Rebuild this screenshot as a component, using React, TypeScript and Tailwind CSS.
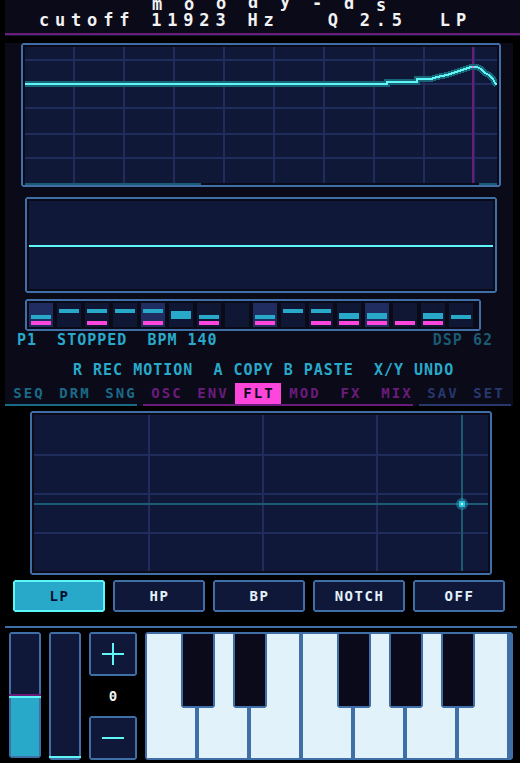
import React from "react";

// pixel-style frame: square 2px border with the corner pixels knocked out
const notch =
  "[clip-path:polygon(2px_0,calc(100%_-_2px)_0,100%_2px,100%_calc(100%_-_2px),calc(100%_-_2px)_100%,2px_100%,0_calc(100%_-_2px),0_2px)]";

type Step = { hi?: boolean; cy?: string; mag?: boolean };

const steps: Step[] = [
  { hi: true, cy: "mt-[12px] h-[4px]", mag: true },
  { cy: "mt-[6px] h-[4px]" },
  { cy: "mt-[6px] h-[4px]", mag: true },
  { cy: "mt-[6px] h-[4px]" },
  { hi: true, cy: "mt-[6px] h-[4px]", mag: true },
  { cy: "mt-[8px] h-[8px]" },
  { cy: "mt-[12px] h-[4px]", mag: true },
  {},
  { hi: true, cy: "mt-[12px] h-[4px]", mag: true },
  { cy: "mt-[6px] h-[4px]" },
  { cy: "mt-[6px] h-[4px]", mag: true },
  { cy: "mt-[10px] h-[6px]", mag: true },
  { hi: true, cy: "mt-[10px] h-[6px]", mag: true },
  { mag: true },
  { cy: "mt-[10px] h-[6px]", mag: true },
  { cy: "mt-[12px] h-[4px]" },
];

const tabGroups = [
  { line: "w-[132px] bg-[#1a6a86]", tabs: [["SEQ", "text-[#1a6a86]"], ["DRM", "text-[#1a6a86]"], ["SNG", "text-[#1a6a86]"]] },
  {
    line: "w-[270px] bg-[#6b1c7b]",
    tabs: [["OSC", "text-[#6b1c7b]"], ["ENV", "text-[#6b1c7b]"], ["FLT", "on"], ["MOD", "text-[#6b1c7b]"], ["FX", "text-[#6b1c7b]"], ["MIX", "text-[#6b1c7b]"]],
  },
  { line: "w-[92px] bg-[#27386c]", tabs: [["SAV", "text-[#27386c]"], ["SET", "text-[#27386c]"]] },
];

const filters = ["LP", "HP", "BP", "NOTCH", "OFF"];

// graph curve of the filter response
const curve =
  "0,37 362,37 362,35 392,35 392,32 406,32 412,30 422,28 428,26 434,24 440,22 446,20 452,20 456,22 460,26 464,28 468,32 470,36 472,38";

const blackKeys = ["left-[36px]", "left-[88px]", "left-[192px]", "left-[244px]", "left-[296px]"];

function Title() {
  const letters: [string, string][] = [
    ["m", "translate-y-[1px]"],
    ["o", "translate-y-[1px]"],
    ["o", "translate-y-[0px]"],
    ["d", "-translate-y-[1px]"],
    ["y", "-translate-y-[2px]"],
    ["-", "translate-y-[0px]"],
    ["d", "translate-y-[0px]"],
    ["s", "translate-y-[2px]"],
  ];
  return (
    <div className="flex h-[17px] -mt-[5px] pl-[147px] text-[17px] leading-[17px] text-[#f2f2f2]">
      {letters.map(([ch, off], i) => (
        <span key={i} className={`w-[32px] ${off}`}>
          {ch}
        </span>
      ))}
    </div>
  );
}

function FilterGraph() {
  const vlines = [48, 98, 148, 198, 248, 298, 348, 398, 448];
  const hlines = [12, 36, 60, 86, 110];
  return (
    <div className={`ml-[16px] mt-[7px] w-[480px] bg-[#3f6fa6] p-[2px] ${notch}`}>
      <div className="bg-[#0a0a19] px-[2px] pt-[2px]">
        <svg width="472" height="138" shapeRendering="crispEdges" className="block">
          <rect x="0" y="0" width="472" height="136" fill="#101838" />
          {vlines.map((x) => (
            <rect key={x} x={x} y="0" width="2" height="136" fill="#202c5c" />
          ))}
          {hlines.map((y) => (
            <rect key={y} x="0" y={y} width="472" height="2" fill="#202c5c" />
          ))}
          <rect x="447" y="0" width="2" height="136" fill="#6b1c7b" />
          <polyline points={curve} fill="none" stroke="#1a6478" strokeWidth="6" />
          <polyline points={curve} fill="none" stroke="#5ef6f6" strokeWidth="2" />
          <rect x="447" y="19" width="2" height="2" fill="#ff7ae8" />
          <rect x="0" y="136" width="176" height="2" fill="#1a5a72" />
          <rect x="454" y="136" width="18" height="2" fill="#1a5a72" />
        </svg>
      </div>
    </div>
  );
}

function Scope() {
  return (
    <div className={`ml-[20px] mt-[10px] w-[472px] bg-[#3f6fa6] p-[2px] ${notch}`}>
      <div className="bg-[#0a0a19] p-[2px]">
        <div className="h-[88px] bg-[#0f1838] pt-[44px]">
          <div className="h-[2px] bg-[#5ef6f6]" />
        </div>
      </div>
    </div>
  );
}

function Steps() {
  return (
    <div className={`ml-[20px] mt-[6px] w-[456px] bg-[#3f6fa6] p-[2px] ${notch}`}>
      <div className="flex gap-[4px] bg-[#0a0a19] p-[2px]">
        {steps.map((s, i) => (
          <div
            key={i}
            className={`flex h-[24px] w-[24px] flex-col px-[2px] pb-[2px] ${s.hi ? "bg-[#1f2d60]" : "bg-[#0f1735]"}`}
          >
            {s.cy && <div className={`${s.cy} bg-[#29a9c9]`} />}
            {s.mag && <div className="mt-auto h-[4px] bg-[#ff46dc]" />}
          </div>
        ))}
      </div>
    </div>
  );
}

function Tabs() {
  return (
    <div className="mt-[6px] flex">
      {tabGroups.map((g, gi) => (
        <div key={gi} className="flex flex-col">
          <div className="flex">
            {g.tabs.map(([label, tone]) => (
              <div
                key={label}
                className={`flex h-[21px] w-[46px] items-center justify-center text-[14px] leading-[21px] tracking-[2px] pl-[2px] ${
                  tone === "on" ? "bg-[#ff46dc] text-[#0a0a19]" : tone
                }`}
              >
                {label}
              </div>
            ))}
          </div>
          <div className={`h-[2px] ${g.line}`} />
        </div>
      ))}
    </div>
  );
}

function XYPad() {
  const vlines = [114, 228, 342];
  const hlines = [39, 78, 117];
  return (
    <div className={`ml-[30px] mt-[5px] w-[462px] bg-[#3f6fa6] p-[2px] ${notch}`}>
      <div className="bg-[#0a0a19] p-[2px]">
        <svg width="454" height="156" shapeRendering="crispEdges" className="block">
          <rect x="0" y="0" width="454" height="156" fill="#0f1838" />
          {vlines.map((x) => (
            <rect key={x} x={x} y="0" width="2" height="156" fill="#202c5c" />
          ))}
          {hlines.map((y) => (
            <rect key={y} x="0" y={y} width="454" height="2" fill="#202c5c" />
          ))}
          <rect x="427" y="0" width="2" height="156" fill="#1a5a72" />
          <rect x="0" y="88" width="454" height="2" fill="#1a5a72" />
          <circle cx="428" cy="89" r="6" fill="#29a9c9" opacity="0.45" shapeRendering="auto" />
          <rect x="425" y="86" width="6" height="6" fill="#29c4dc" />
          <rect x="427" y="88" width="2" height="2" fill="#c8ffff" />
        </svg>
      </div>
    </div>
  );
}

function FilterButtons() {
  return (
    <div className="ml-[13px] mt-[5px] flex gap-[8px]">
      {filters.map((f) => {
        const on = f === "LP";
        return (
          <div key={f} className={`w-[92px] p-[2px] ${on ? "bg-[#5ef6f6]" : "bg-[#3f6fa6]"} ${notch}`}>
            <div
              className={`flex h-[28px] items-center justify-center text-[14px] tracking-[1.5px] pl-[1px] ${
                on ? "bg-[#29a9c9] text-[#0a1030]" : "bg-[#0f1838] text-[#e2f2fb]"
              }`}
            >
              {f}
            </div>
          </div>
        );
      })}
    </div>
  );
}

function Sliders() {
  return (
    <>
      <div className={`h-[126px] w-[32px] bg-[#3f6fa6] p-[2px] ${notch}`}>
        <div className="flex h-full flex-col bg-[#0f1838]">
          <div className="mt-auto -mx-[2px] h-[2px] bg-[#6b1c7b]" />
          <div className="-mx-[2px] h-[2px] bg-[#5ef6f6]" />
          <div className="h-[58px] bg-[#29a9c9]" />
        </div>
      </div>
      <div className={`ml-[8px] h-[128px] w-[32px] bg-[#3f6fa6] p-[2px] ${notch}`}>
        <div className="flex h-full flex-col bg-[#0f1838]">
          <div className="mt-auto -mx-[2px] h-[2px] bg-[#5ef6f6]" />
        </div>
      </div>
    </>
  );
}

function Octave() {
  return (
    <div className="ml-[8px] flex w-[48px] flex-col">
      <div className={`h-[44px] bg-[#3f6fa6] p-[2px] ${notch}`}>
        <div className="flex h-full items-center justify-center bg-[#0f1838]">
          <svg width="22" height="22" shapeRendering="crispEdges">
            <rect x="10" y="0" width="2" height="22" fill="#5ef6f6" />
            <rect x="0" y="10" width="22" height="2" fill="#5ef6f6" />
          </svg>
        </div>
      </div>
      <div className="flex h-[40px] items-center justify-center text-[14px] text-[#f2f2f2]">0</div>
      <div className={`h-[44px] bg-[#3f6fa6] p-[2px] ${notch}`}>
        <div className="flex h-full items-center justify-center bg-[#0f1838]">
          <svg width="22" height="2" shapeRendering="crispEdges">
            <rect x="0" y="0" width="22" height="2" fill="#5ef6f6" />
          </svg>
        </div>
      </div>
    </div>
  );
}

function Keyboard() {
  return (
    <div className={`relative ml-[8px] h-[128px] w-[368px] bg-[#3f6fa6] pb-[2px] pl-[2px] pr-[6px] pt-[2px] ${notch}`}>
      <div className="flex h-full gap-[4px]">
        {Array.from({ length: 7 }).map((_, i) => (
          <div key={i} className="w-[48px] bg-[#e2f2fb]" />
        ))}
      </div>
      {blackKeys.map((k) => (
        <div key={k} className={`absolute top-0 ${k} h-[76px] w-[34px] bg-[#3f6fa6] px-[2px] pb-[2px] pt-[2px] ${notch}`}>
          <div className="h-full bg-[#0a0a1a]" />
        </div>
      ))}
    </div>
  );
}

export default function App() {
  return (
    <div className="h-[763px] w-[520px] overflow-hidden bg-black font-bold [font-family:'DejaVu_Sans_Mono',monospace]">
      <div className="ml-[5px] w-[515px] bg-[#0a0a19]">
        <div className="h-[33px] overflow-hidden">
          <Title />
          <div className="whitespace-pre pl-[34px] text-[17px] leading-[17px] tracking-[5.8px] text-[#f2f2f2]">
            cutoff 11923 Hz   Q 2.5  LP
          </div>
        </div>
        <div className="h-[2px] bg-[#6b1c7b]" />
        <div className="h-[1px] bg-[#141a3a]" />
      </div>
      <div className="ml-[5px] w-[508px] bg-[#0a0a19] pb-0">
        <FilterGraph />
        <Scope />
        <Steps />
        <div className="mt-[2px] flex justify-between pl-[12px] pr-[20px] text-[15px] leading-[14px] tracking-[1px] text-[#29a9c9]">
          <span className="whitespace-pre">P1  STOPPED  BPM 140</span>
          <span className="whitespace-pre text-[#1a5a72]">DSP 62</span>
        </div>
        <div className="mt-[16px] whitespace-pre pl-[68px] text-[15px] leading-[14px] tracking-[1px] text-[#29a9c9]">
          R REC MOTION  A COPY B PASTE  X/Y UNDO
        </div>
        <Tabs />
      </div>
      <XYPad />
      <FilterButtons />
      <div className="ml-[5px] mt-[14px] h-[2px] w-[512px] bg-[#3f6fa6]" />
      <div className="ml-[9px] mt-[4px] flex items-start">
        <Sliders />
        <Octave />
        <Keyboard />
      </div>
    </div>
  );
}
